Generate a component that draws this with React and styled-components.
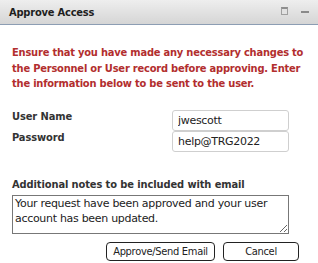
import styled, { createGlobalStyle } from "styled-components";

const GlobalStyle = createGlobalStyle`
  html, body {
    margin: 0;
    padding: 0;
    background: #ffffff;
  }
  body {
    font-family: "DejaVu Sans", Verdana, sans-serif;
  }
`;

const BOLD_FONT = `"DejaVu Sans Condensed", "DejaVu Sans", Verdana, sans-serif`;
const TEXT_FONT = `"DejaVu Sans", Verdana, sans-serif`;

function App() {
  return (
    <Dialog>
      <GlobalStyle />
      <TitleBar>
        <Title>Approve Access</Title>
        <Controls>
          <MaxIcon />
          <MinIcon />
        </Controls>
      </TitleBar>
      <Body>
        <Warning>
          Ensure that you have made any necessary changes to the Personnel or
          User record before approving. Enter the information below to be sent
          to the user.
        </Warning>
        <Form>
          <Label>User Name</Label>
          <Field defaultValue="jwescott" />
          <Label>Password</Label>
          <Field defaultValue="help@TRG2022" />
        </Form>
        <NotesLabel>Additional notes to be included with email</NotesLabel>
        <Notes defaultValue="Your request have been approved and your user account has been updated." />
        <Actions>
          <Button $wide>Approve/Send Email</Button>
          <Button>Cancel</Button>
        </Actions>
      </Body>
    </Dialog>
  );
}

export default App;

const Dialog = styled.div`
  width: 318px;
  height: 263px;
  background: #fff;
  overflow: hidden;
`;

const TitleBar = styled.div`
  height: 24px;
  display: flex;
  align-items: center;
  justify-content: space-between;
  padding: 0 9px 0 9px;
  background: linear-gradient(#eeeeee, #d5d5d5);
  border-bottom: 1px solid #8c9db3;
`;

const Title = styled.div`
  font-family: ${BOLD_FONT};
  font-size: 11px;
  font-weight: bold;
  letter-spacing: -0.2px;
  color: #1e1e1e;
`;

const Controls = styled.div`
  display: flex;
  align-items: center;
  gap: 13px;
`;

const MaxIcon = styled.span`
  box-sizing: border-box;
  width: 7px;
  height: 8px;
  margin-top: -2px;
  border: 1px solid #a0a0a0;
  border-top: 2px solid #8e8e8e;
  background: #e2e2e2;
`;

const MinIcon = styled.span`
  width: 8px;
  height: 2px;
  background: #8a8a8a;
`;

const Body = styled.div`
  padding: 20px 10px 0 12px;
`;

const Warning = styled.p`
  margin: 0;
  font-family: ${BOLD_FONT};
  font-size: 11px;
  font-weight: bold;
  letter-spacing: -0.2px;
  line-height: 15.5px;
  color: #b22e2e;
`;

const Form = styled.div`
  display: grid;
  grid-template-columns: 160px 117px;
  margin-top: 18px;
`;

const Label = styled.div`
  font-family: ${BOLD_FONT};
  font-size: 11px;
  font-weight: bold;
  letter-spacing: -0.1px;
  line-height: 13px;
  color: #333;
`;

const Field = styled.input`
  box-sizing: border-box;
  width: 117px;
  height: 21px;
  margin: 0;
  padding: 0 5px;
  border: 1px solid #cfcfcf;
  border-radius: 3px;
  font-family: ${TEXT_FONT};
  font-size: 11px;
  letter-spacing: -0.3px;
  color: #222;
  outline: none;
`;

const NotesLabel = styled.div`
  margin-top: 26px;
  font-family: ${BOLD_FONT};
  font-size: 11px;
  font-weight: bold;
  letter-spacing: -0.1px;
  line-height: 13px;
  color: #333;
`;

const Notes = styled.textarea`
  display: block;
  box-sizing: border-box;
  width: 277px;
  height: 39px;
  margin: 4px 0 0;
  padding: 0 2px;
  border: 1px solid #777;
  border-radius: 0;
  font-family: ${TEXT_FONT};
  font-size: 11px;
  letter-spacing: -0.3px;
  line-height: 15px;
  color: #222;
  resize: both;
  outline: none;
`;

const Actions = styled.div`
  display: flex;
  justify-content: flex-end;
  gap: 8px;
  margin: 8px 9px 0 0;
`;

const Button = styled.button`
  box-sizing: border-box;
  height: 19px;
  width: ${(p) => (p.$wide ? "109px" : "76px")};
  padding: 0;
  border: 1px solid #222;
  border-radius: 4px;
  background: #fff;
  font-family: ${BOLD_FONT};
  font-size: 11px;
  letter-spacing: -0.3px;
  color: #222;
`;
